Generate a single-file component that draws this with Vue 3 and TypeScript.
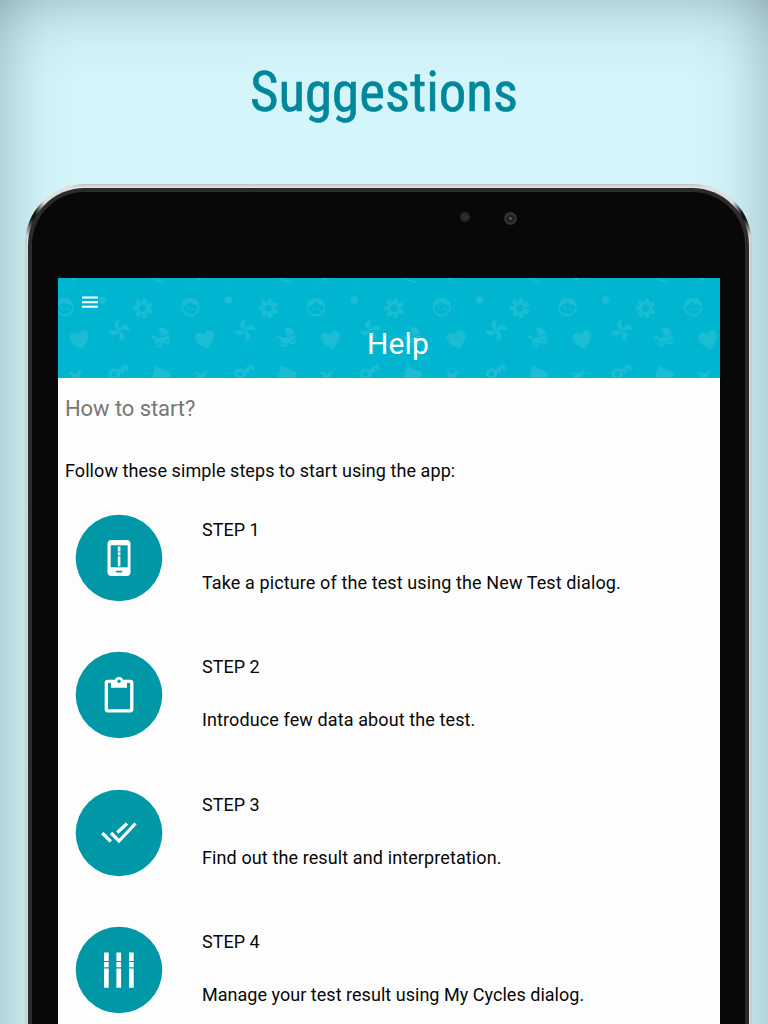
<script setup lang="ts">
interface Step {
  title: string
  text: string
  icon: 'phone' | 'clipboard' | 'checks' | 'strips'
}

const steps: Step[] = [
  { title: 'STEP 1', text: 'Take a picture of the test using the New Test dialog.', icon: 'phone' },
  { title: 'STEP 2', text: 'Introduce few data about the test.', icon: 'clipboard' },
  { title: 'STEP 3', text: 'Find out the result and interpretation.', icon: 'checks' },
  { title: 'STEP 4', text: 'Manage your test result using My Cycles dialog.', icon: 'strips' },
]

const petals = [0, 51.4, 102.9, 154.3, 205.7, 257.1, 308.6]
const blades = [0, 90, 180, 270]
const stripX = [104, 116.4, 129]
</script>

<template>
  <main class="page">
    <svg class="headline" width="768" height="130" viewBox="0 0 768 130">
      <text x="250" y="111" textLength="268" lengthAdjust="spacingAndGlyphs">Suggestions</text>
    </svg>
    <section class="device">
      <div class="bezel">
        <i class="sensor"></i>
        <i class="camera"></i>
        <div class="screen">
          <header class="bar">
            <svg class="motif" width="662" height="100" viewBox="0 0 662 100">
              <defs>
                <pattern id="motif" x="0" y="0" width="125.7" height="100" patternUnits="userSpaceOnUse">
                  <g fill="#1cbdd4">
                    <path d="M13 0h5l-2.500 4zM95 .5l12 3-1 1.500-12-4z" />
                    <circle cx="44.700" cy="22" r="3.700" />
                    <g v-for="dx in [6.700, 132.400]" :key="dx" :transform="`translate(${dx} 29)`">
                      <circle r="8.400" fill="none" stroke="#1cbdd4" stroke-width="1.700" />
                      <path d="M-8-.5Q-3-1.500-1-5.500Q2-2 8-1.500A8 8 0 0 0-8-.5Z" />
                      <circle cx="-2.600" cy="1.500" r="1.100" /><circle cx="3" cy="2" r="1.100" />
                    </g>
                    <g transform="translate(84.700 30.300)">
                      <path v-for="a in petals" :key="a" :transform="`rotate(${a + 12})`" d="M-1.500-4L-2.700-8.500Q0-11.500 2.700-8.500L1.500-4Z" />
                      <circle r="5" fill="none" stroke="#1cbdd4" stroke-width="2.700" />
                    </g>
                    <path transform="translate(21.700 61.500) rotate(-14)" d="M0 10C-4 6-9.500 2-9.500-3C-9.500-8-3-10 0-5C3-10 9.500-8 9.500-3C9.500 2 4 6 0 10Z" />
                    <g transform="translate(61.300 52.300)">
                      <path v-for="a in blades" :key="a" :transform="`rotate(${a})`" d="M0 0Q-6-2-5-7Q-4-10 0-10.500Q-1-5 0 0Z" />
                    </g>
                    <g transform="translate(102.500 59)">
                      <path d="M-2-9.500Q7-11 8.500-2.500L1-1Z" />
                      <path d="M-9.500-.5L-6-1-4 1 9-1.500Q9 4 5 5.500L-3 7-6 2-9.500 1Z" />
                      <circle cx="-2" cy="7" r="2.300" fill="#00b5cf" stroke="#1cbdd4" stroke-width="1.800" />
                      <circle cx="6.500" cy="4.300" r="2.200" fill="#00b5cf" stroke="#1cbdd4" stroke-width="1.800" />
                    </g>
                    <path d="M10 94L14.500 94.500 17 96 24 92 20.500 100H12.500L14 97.500Z" />
                    <g transform="translate(56.500 96)">
                      <circle r="4.200" fill="none" stroke="#1cbdd4" stroke-width="3" />
                      <path d="M3-4L11-10 13-9 14-4 12-3 10.500-6 9-4 9-1 7-1 6-3 4-1Z" />
                    </g>
                    <path d="M97.500 88L108 92.500Q114 93.500 112.500 98L111 100H94Z" />
                  </g>
                </pattern>
              </defs>
              <rect width="662" height="100" fill="url(#motif)" />
            </svg>
            <svg class="menu" width="16" height="12" viewBox="0 0 16 12">
              <path d="M0 1.500H16M0 6.200H16M0 10.800H16" stroke="#fff" stroke-width="1.900" />
            </svg>
            <h1>Help</h1>
          </header>
          <div class="content">
            <h2>How to start?</h2>
            <p class="intro">Follow these simple steps to start using the app:</p>
            <article v-for="step in steps" :key="step.title" class="step" :class="step.icon">
              <svg class="badge" width="88" height="88" viewBox="75 514 88 88">
                <circle cx="119" cy="558" r="43.300" fill="#0097a7" />
                <g v-if="step.icon === 'phone'">
                  <rect x="107.500" y="540" width="23" height="36" rx="4" fill="#fff" />
                  <path d="M110.700 545.300h17v22h-17z" fill="#0097a7" />
                  <path d="M117.800 546.500h2.600v5h-2.600zM117.800 552.300h2.600v3h-2.600zM117.800 556.200h2.600v10h-2.600z" fill="#fff" />
                  <rect x="115.700" y="570.700" width="6.600" height="1.800" rx=".8" fill="#0097a7" />
                </g>
                <g v-else-if="step.icon === 'clipboard'">
                  <rect x="106.300" y="544.300" width="25.500" height="29.500" rx="1.500" fill="none" stroke="#fff" stroke-width="3.300" />
                  <path d="M111 543.500h3.800a4.300 4.300 0 0 1 8.400 0h3.800v7.300h-16z" fill="#fff" />
                  <circle cx="119" cy="544.300" r="1.700" fill="#0097a7" />
                </g>
                <g v-else-if="step.icon === 'checks'" fill="none" stroke="#fff" stroke-width="3.200">
                  <path d="M102.300 558L110.800 566.500M111 558L119 566 135.500 548.500M117.300 557.500L127 548.500" />
                </g>
                <g v-else fill="#fff">
                  <path v-for="x in stripX" :key="x" :d="`M${x} 540.400h4.700v8.600h-4.700zM${x} 549.900h4.700v5.400h-4.700zM${x} 556.400h4.700v19.400h-4.700z`" />
                </g>
              </svg>
              <div class="copy">
                <h3>{{ step.title }}</h3>
                <p>{{ step.text }}</p>
              </div>
            </article>
          </div>
        </div>
      </div>
    </section>
  </main>
</template>

<style>
body {
  margin: 0;
  overflow: hidden;
}
</style>

<style scoped>
.page {
  --s1: rgba(70, 95, 100, 0.23);
  --s2: rgba(70, 95, 100, 0.14);
  --s3: rgba(70, 95, 100, 0.075);
  --s4: rgba(70, 95, 100, 0.03);
  --s5: rgba(70, 95, 100, 0);
  width: 768px;
  height: 1024px;
  overflow: hidden;
  background:
    linear-gradient(180deg, var(--s1), var(--s2) 17px, var(--s3) 32px, var(--s4) 50px, var(--s5) 80px),
    linear-gradient(90deg, var(--s1), var(--s2) 18px, var(--s3) 32px, var(--s4) 48px, var(--s5) 80px),
    linear-gradient(270deg, var(--s1), var(--s2) 18px, var(--s3) 32px, var(--s4) 48px, var(--s5) 80px),
    #d4f6fb;
  font-family: Roboto, "Liberation Sans", sans-serif;
}
h1, h2, h3, p {
  margin: 0;
  font-weight: 400;
}
.headline {
  display: block;
}
.headline text {
  font-family: "Roboto Condensed", Roboto, "Liberation Sans", sans-serif;
  font-stretch: condensed;
  font-size: 55.5px;
  fill: #00879b;
  stroke: #00879b;
  stroke-width: 0.6px;
}
.device {
  box-sizing: border-box;
  width: 727px;
  height: 900px;
  margin: 54px 0 0 25px;
  padding: 4px 3px 0;
  border-radius: 60px 60px 0 0;
  background:
    radial-gradient(ellipse 14px 24px at 7px 30px, #111 20%, transparent),
    radial-gradient(ellipse 14px 24px at 720px 30px, #111 20%, transparent),
    linear-gradient(180deg, #c5c1c2, #e4e4e4 4px, transparent 5px),
    linear-gradient(90deg, #c7c4c6, #dedede 3px, #dedede 724px, #c7c4c6);
}
.bezel {
  position: relative;
  box-sizing: border-box;
  height: 896px;
  padding: 86px 26px 0 26px;
  border: solid #2b2b2b;
  border-width: 4px 4px 0;
  border-radius: 57px 57px 0 0;
  background: #080808;
}
.sensor, .camera {
  position: absolute;
  border-radius: 50%;
}
.sensor {
  left: 428px;
  top: 20px;
  width: 10px;
  height: 10px;
  background: radial-gradient(circle, #343434, #222 5px);
}
.camera {
  left: 472px;
  top: 20px;
  width: 13px;
  height: 13px;
  background: radial-gradient(circle, #777 0, #202020 2px 3px, #343434 5px, #222);
}
.screen {
  width: 662px;
  height: 806px;
  background: #fdfdfd;
}
.bar {
  position: relative;
  height: 100px;
  background: #00b5cf;
  color: #fff;
}
.motif {
  position: absolute;
  inset: 0;
}
.menu {
  position: absolute;
  left: 24px;
  top: 18px;
}
h1 {
  position: relative;
  padding: 48px 0 0 309px;
  font-size: 30px;
  line-height: 36px;
  letter-spacing: 0.1px;
}
.content {
  padding: 18px 7px 0;
  color: #080808;
}
h2 {
  font-size: 22px;
  line-height: 26px;
  letter-spacing: -0.08px;
  color: #777;
}
.intro {
  margin-top: 37px;
  font-size: 18px;
  line-height: 24px;
  letter-spacing: 0.07px;
}
.step {
  display: flex;
  gap: 39px;
  height: 137.4px;
  padding-left: 10px;
}
.intro + .step {
  margin-top: 31px;
}
.badge {
  flex: none;
}
.copy {
  padding-top: 4px;
}
h3, .copy p {
  font-size: 18px;
  line-height: 24px;
}
.copy p {
  margin-top: 29px;
  letter-spacing: 0.11px;
}
.strips .copy p {
  letter-spacing: 0.03px;
}
</style>
